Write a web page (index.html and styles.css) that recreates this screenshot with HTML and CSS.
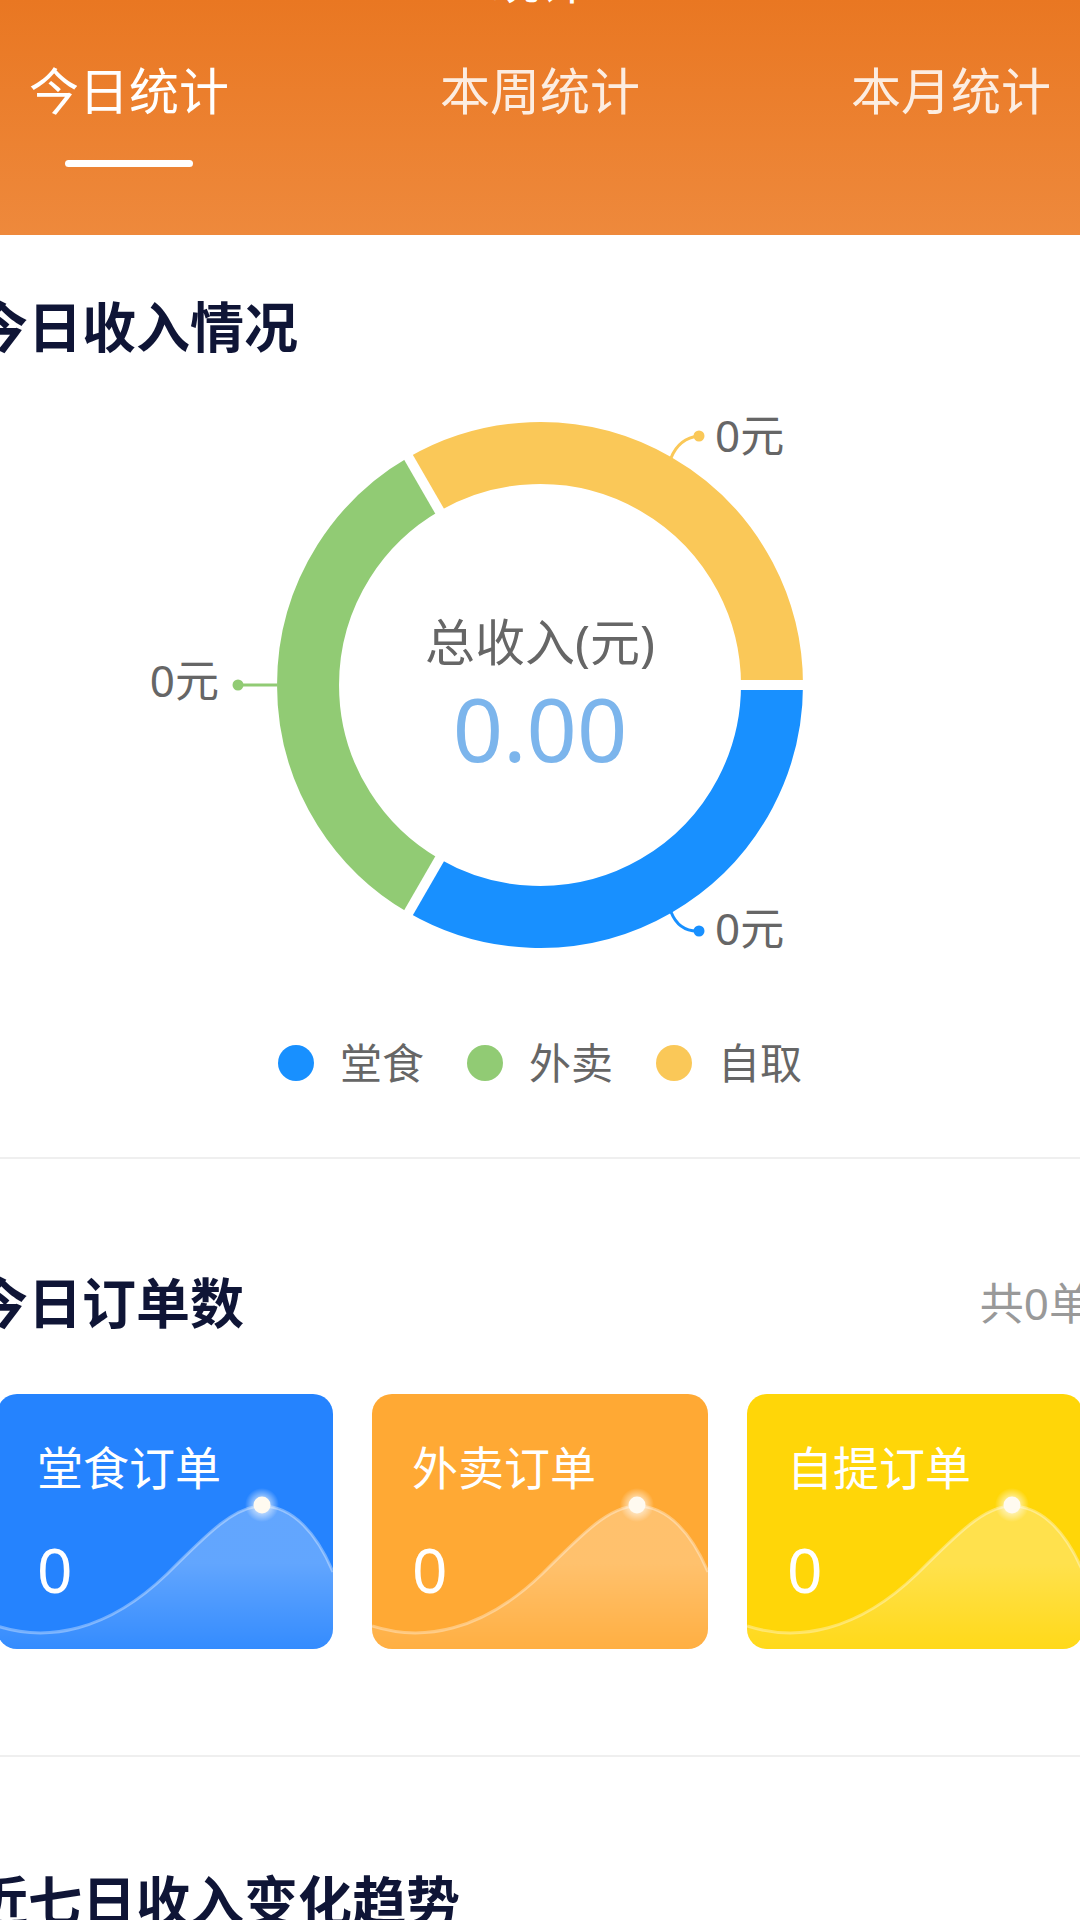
FILE: index.html
```html
<!DOCTYPE html>
<html lang="zh-CN">
<head>
    <meta charset="UTF-8">
    <meta name="viewport" content="width=device-width, initial-scale=1.0">
    <title>统计</title>
    <link rel="stylesheet" href="styles.css">
</head>
<body>
<div class="page">
    <header class="top">
        <div class="top-title">统计</div>
        <nav class="tabs">
            <div class="tab active"><span>今日统计</span><i class="tab-bar"></i></div>
            <div class="tab"><span>本周统计</span><i class="tab-bar"></i></div>
            <div class="tab"><span>本月统计</span><i class="tab-bar"></i></div>
        </nav>
    </header>

    <section class="block block-first">
        <div class="block-head">
            <h2 class="block-title">今日收入情况</h2>
        </div>

        <svg class="ring" viewBox="0 0 1080 600" width="1080" height="600">
            <!-- three equal slices, start at 3 o'clock, clockwise -->
            <path d="M772,300 A232,232 0 0 1 424,500.9" fill="none" stroke="#1890ff" stroke-width="62"/>
            <path d="M424,500.9 A232,232 0 0 1 424,99.1" fill="none" stroke="#91cb74" stroke-width="62"/>
            <path d="M424,99.1 A232,232 0 0 1 772,300" fill="none" stroke="#fac858" stroke-width="62"/>
            <g stroke="#fff" stroke-width="10">
                <line x1="730" y1="300" x2="812" y2="300"/>
                <line x1="445" y1="464.5" x2="404" y2="535.5"/>
                <line x1="445" y1="135.5" x2="404" y2="64.5"/>
            </g>

            <g fill="none" stroke-width="3">
                <path d="M671,73 Q679,53 699,51" stroke="#fac858"/>
                <path d="M671,527 Q679,547 699,546" stroke="#1890ff"/>
                <path d="M277,300 L238,300" stroke="#91cb74"/>
            </g>
            <circle cx="699" cy="51" r="5.5" fill="#fac858"/>
            <circle cx="699" cy="546" r="5.5" fill="#1890ff"/>
            <circle cx="238" cy="300" r="5.5" fill="#91cb74"/>

            <g class="ring-label">
                <text x="715" y="67">0元</text>
                <text x="715" y="560">0元</text>
                <text x="219" y="312" text-anchor="end">0元</text>
            </g>

            <text class="ring-title" x="540" y="276" text-anchor="middle">总收入(元)</text>
            <text class="ring-value" x="540" y="377" text-anchor="middle">0.00</text>
        </svg>

        <div class="legend">
            <div class="legend-item"><i class="dot" style="background:#1890ff"></i>堂食</div>
            <div class="legend-item"><i class="dot" style="background:#91cb74"></i>外卖</div>
            <div class="legend-item"><i class="dot" style="background:#fac858"></i>自取</div>
        </div>
    </section>

    <section class="block">
        <div class="block-head">
            <h2 class="block-title">今日订单数</h2>
            <span class="block-extra">共0单</span>
        </div>

        <div class="cards">
            <div class="card card-blue">
                <svg class="wave" viewBox="0 0 336 255" width="336" height="255">
                    <defs>
                        <linearGradient id="waveFill" x1="0" y1="0" x2="0" y2="1">
                            <stop offset="0.4" stop-color="#fff" stop-opacity="0.28"/>
                            <stop offset="1" stop-color="#fff" stop-opacity="0.07"/>
                        </linearGradient>
                        <radialGradient id="waveGlow">
                            <stop offset="0.3" stop-color="#fff" stop-opacity="0.7"/>
                            <stop offset="1" stop-color="#fff" stop-opacity="0"/>
                        </radialGradient>
                    </defs>
                    <path class="wave-area" d="M0,232 C50,248 110,238 170,180 C212,138 238,112 265,112 C296,112 320,140 336,178 L336,255 L0,255 Z"/>
                    <path class="wave-line" d="M0,232 C50,248 110,238 170,180 C212,138 238,112 265,112 C296,112 320,140 336,178"/>
                    <circle cx="265" cy="111" r="17" fill="url(#waveGlow)"/>
                    <circle cx="265" cy="111" r="8.5" fill="#fffaf0"/>
                </svg>
                <div class="card-name">堂食订单</div>
                <div class="card-num">0</div>
            </div>
            <div class="card card-orange">
                <svg class="wave" viewBox="0 0 336 255" width="336" height="255">
                    <path class="wave-area" d="M0,232 C50,248 110,238 170,180 C212,138 238,112 265,112 C296,112 320,140 336,178 L336,255 L0,255 Z"/>
                    <path class="wave-line" d="M0,232 C50,248 110,238 170,180 C212,138 238,112 265,112 C296,112 320,140 336,178"/>
                    <circle cx="265" cy="111" r="17" fill="url(#waveGlow)"/>
                    <circle cx="265" cy="111" r="8.5" fill="#fffaf0"/>
                </svg>
                <div class="card-name">外卖订单</div>
                <div class="card-num">0</div>
            </div>
            <div class="card card-yellow">
                <svg class="wave" viewBox="0 0 336 255" width="336" height="255">
                    <path class="wave-area" d="M0,232 C50,248 110,238 170,180 C212,138 238,112 265,112 C296,112 320,140 336,178 L336,255 L0,255 Z"/>
                    <path class="wave-line" d="M0,232 C50,248 110,238 170,180 C212,138 238,112 265,112 C296,112 320,140 336,178"/>
                    <circle cx="265" cy="111" r="17" fill="url(#waveGlow)"/>
                    <circle cx="265" cy="111" r="8.5" fill="#fffaf0"/>
                </svg>
                <div class="card-name">自提订单</div>
                <div class="card-num">0</div>
            </div>
        </div>
    </section>

    <section class="block">
        <div class="block-head">
            <h2 class="block-title">近七日收入变化趋势</h2>
        </div>
        <div class="trend"></div>
    </section>
</div>
</body>
</html>
```

FILE: styles.css
```css
body {
    margin: 0;
    padding: 0;
    background: #fff;
    font-family: "Noto Sans", "Noto Sans CJK SC", sans-serif;
    color: #0f1536;
    overflow: hidden;
}

.page {
    width: 1080px;
}

/* orange header with tabs */
.top {
    display: flex;
    flex-direction: column;
    align-items: center;
    padding-bottom: 68px;
    background: linear-gradient(180deg, #e97722 0%, #ee893c 100%);
    color: #fff;
}

.top-title {
    margin-top: -43px;
    font-size: 48px;
    line-height: 48px;
}

.tabs {
    align-self: stretch;
    display: flex;
    justify-content: space-between;
    padding: 0 29px;
    margin-top: 61px;
}

.tab {
    display: flex;
    flex-direction: column;
    align-items: center;
    font-size: 50px;
    line-height: 50px;
    color: rgba(255, 255, 255, 0.86);
}

.tab-bar {
    width: 128px;
    height: 7px;
    margin-top: 44px;
    border-radius: 4px;
}

.tab.active {
    color: #fff;
}

.tab.active .tab-bar {
    background: #fff;
}

/* sections */
.block {
    padding-top: 117px;
    padding-bottom: 106px;
    border-top: 2px solid #efefef;
}

.block-first {
    padding-top: 65px;
    padding-bottom: 73px;
    border-top: 0;
}

.block-head {
    display: flex;
    justify-content: space-between;
    align-items: center;
    margin: 0 -13px 0 -26px;
}

.block-title {
    margin: 0;
    font-size: 54px;
    line-height: 54px;
    font-weight: 700;
    color: #0f1536;
}

.block-extra {
    font-size: 44px;
    line-height: 54px;
    color: #999;
}

/* donut */
.ring {
    display: block;
    margin-top: 31px;
}

.ring-label text {
    font-size: 44px;
    fill: #666;
}

.ring-title {
    font-size: 50px;
    fill: #666;
}

.ring-value {
    font-size: 88px;
    fill: #7cb5ec;
}

.legend {
    display: flex;
    justify-content: center;
    gap: 43px;
    margin-top: 57px;
    font-size: 42px;
    line-height: 42px;
    color: #666;
}

.legend-item {
    display: flex;
    align-items: center;
}

.dot {
    width: 36px;
    height: 36px;
    margin-right: 26px;
    border-radius: 50%;
}

/* order cards */
.cards {
    display: grid;
    grid-template-columns: repeat(3, 336px);
    gap: 39px;
    margin: 64px -3px 0;
}

.card {
    position: relative;
    height: 255px;
    padding: 50px 0 0 40px;
    box-sizing: border-box;
    border-radius: 20px;
    overflow: hidden;
    color: #fff;
}

.card-blue { background: #2583fe; }
.card-orange { background: #ffa934; }
.card-yellow { background: #ffd608; }

.wave {
    position: absolute;
    left: 0;
    top: 0;
}

.wave-area {
    fill: url(#waveFill);
}

.wave-line {
    fill: none;
    stroke: rgba(255, 255, 255, 0.35);
    stroke-width: 3;
}

.card-name {
    position: relative;
    font-size: 46px;
    line-height: 46px;
}

.card-num {
    position: relative;
    margin-top: 48px;
    font-size: 62px;
    line-height: 62px;
}

.trend {
    height: 400px;
}
```
